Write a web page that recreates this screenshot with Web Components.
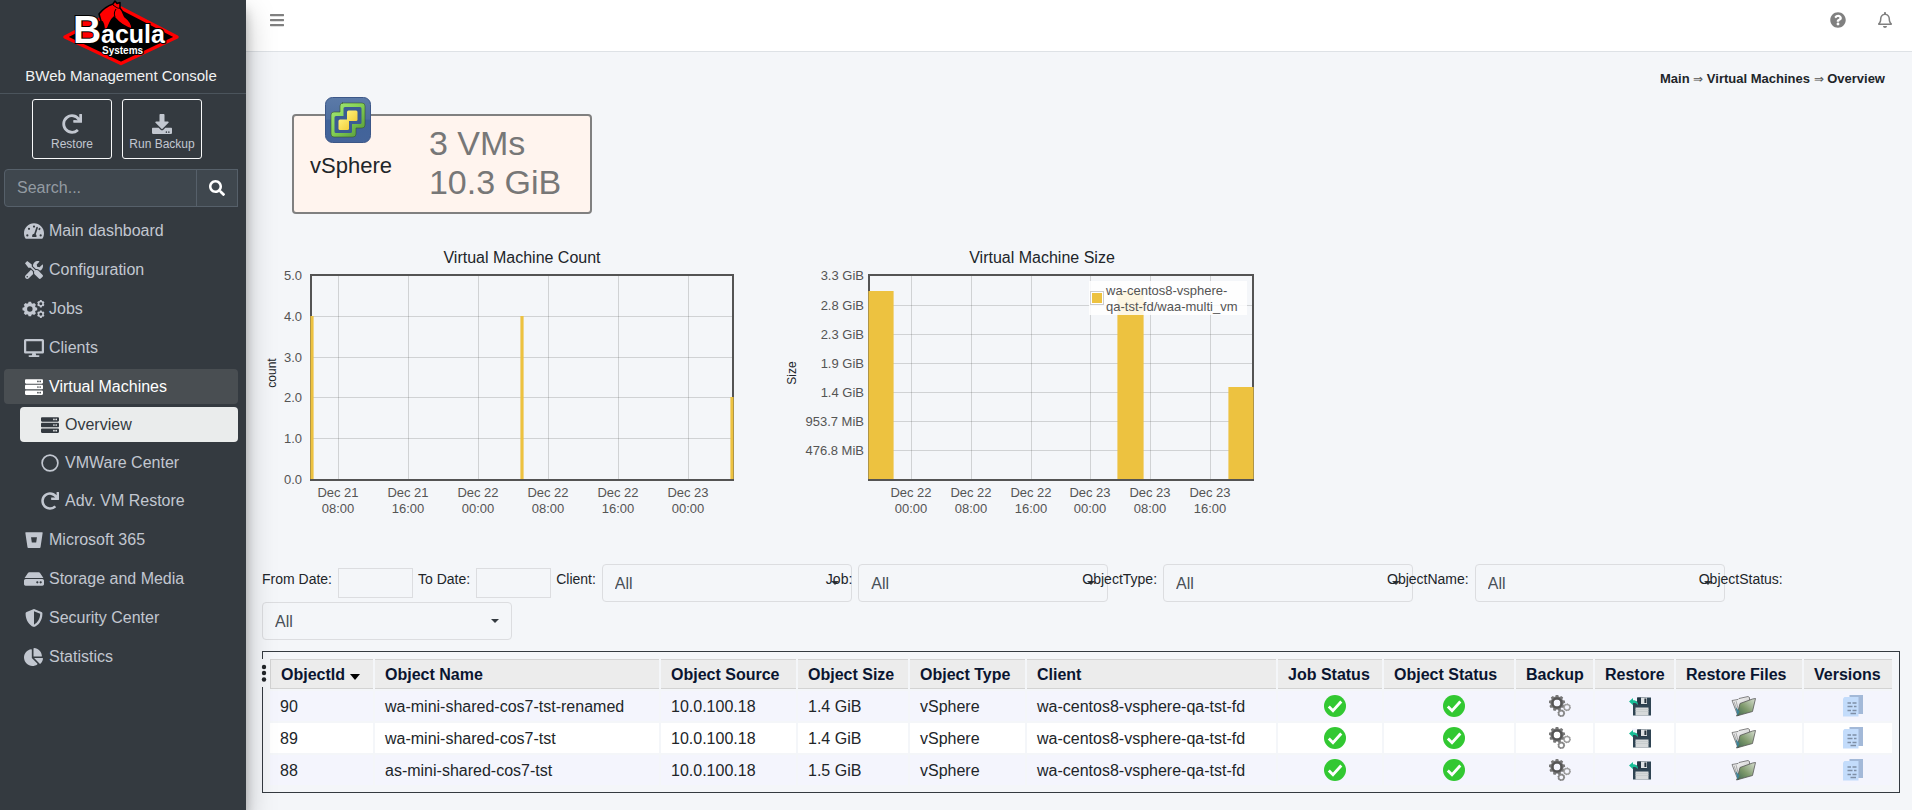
<!DOCTYPE html>
<html lang="en">
<head>
<meta charset="utf-8">
<title>BWeb - Virtual Machines Overview</title>
<style>
    body {
        margin: 0;
        background: #f4f6f9;
        color: #212529;
        font: 16px/24px "Liberation Sans", Arial, sans-serif;
    }
</style>
</head>
<body>
<bweb-app>
    <bweb-sidebar slot="sidebar">
        <nav-item icon="gauge">Main dashboard</nav-item>
        <nav-item icon="tools">Configuration</nav-item>
        <nav-item icon="cogs">Jobs</nav-item>
        <nav-item icon="desktop">Clients</nav-item>
        <nav-item icon="server" state="open">Virtual Machines
            <nav-item slot="sub" icon="server" state="active">Overview</nav-item>
            <nav-item slot="sub" icon="circle">VMWare Center</nav-item>
            <nav-item slot="sub" icon="redo">Adv. VM Restore</nav-item>
        </nav-item>
        <nav-item icon="bucket">Microsoft 365</nav-item>
        <nav-item icon="hdd">Storage and Media</nav-item>
        <nav-item icon="shield">Security Center</nav-item>
        <nav-item icon="pie">Statistics</nav-item>
    </bweb-sidebar>
    <top-bar></top-bar>
    <bread-crumb></bread-crumb>
    <vm-card>vSphere
        <span slot="count">3 VMs</span>
        <span slot="size">10.3 GiB</span>
    </vm-card>
    <chart-row>
        <bar-chart series="count">Virtual Machine Count</bar-chart>
        <bar-chart series="size">Virtual Machine Size</bar-chart>
    </chart-row>
    <filter-bar></filter-bar>
    <object-table></object-table>
</bweb-app>

<script>
// Gear outline centred on cx,cy with a round hole
function gear(cx, cy, r, teeth, hole) {
    const pts = [];
    const step = Math.PI * 2 / teeth;
    for (let i = 0; i < teeth; i++) {
        [[-0.36, 0.8], [-0.22, 1], [0.22, 1], [0.36, 0.8]].forEach(([a, k]) => {
            const t = (i + a) * step;
            pts.push((cx + Math.sin(t) * r * k).toFixed(1) + ' ' + (cy - Math.cos(t) * r * k).toFixed(1));
        });
    }
    return `M${pts.join('L')}zM${cx - hole} ${cy}a${hole} ${hole} 0 1 0 ${hole * 2} 0a${hole} ${hole} 0 1 0 ${-hole * 2} 0z`;
}

const serverUnit = y => `M480 ${y + 128}H32c-18 0-32-14-32-32v-64c0-18 14-32 32-32h448c18 0 32 14 32 32v64c0 18-14 32-32 32zM432 ${y + 40}a24 24 0 1 0 0 48a24 24 0 1 0 0-48zM368 ${y + 40}a24 24 0 1 0 0 48a24 24 0 1 0 0-48z`;

// name: [viewBox width, viewBox height, markup]
const ICONS = {
    bars: [448, 512, '<path d="M16 132h416c8.8 0 16-7.2 16-16V76c0-8.800-7.200-16-16-16H16C7.200 60 0 67.200 0 76v40c0 8.800 7.200 16 16 16zm0 160h416c8.800 0 16-7.200 16-16v-40c0-8.800-7.200-16-16-16H16c-8.800 0-16 7.200-16 16v40c0 8.800 7.200 16 16 16zm0 160h416c8.800 0 16-7.200 16-16v-40c0-8.800-7.200-16-16-16H16c-8.800 0-16 7.200-16 16v40c0 8.800 7.200 16 16 16z"/>'],
    search: [512, 512, '<path d="M505 442.700L405.300 343c-4.500-4.500-10.600-7-17-7H372c27.600-35.300 44-79.700 44-128C416 93.100 322.900 0 208 0S0 93.100 0 208s93.100 208 208 208c48.300 0 92.700-16.400 128-44v16.300c0 6.400 2.500 12.500 7 17l99.700 99.700c9.400 9.400 24.600 9.400 33.900 0l28.300-28.300c9.400-9.400 9.400-24.600.1-34zM208 336c-70.700 0-128-57.200-128-128 0-70.700 57.200-128 128-128 70.700 0 128 57.200 128 128 0 70.700-57.200 128-128 128z"/>'],
    question: [512, 512, '<path d="M504 256c0 137-111 248-248 248S8 393 8 256C8 119 119 8 256 8s248 111 248 248zM262.700 90c-54.500 0-89.300 23-116.600 63.800-3.500 5.300-2.400 12.400 2.700 16.300l34.700 26.300c5.200 3.900 12.600 3 16.700-2.100 17.900-22.700 30.100-35.800 57.300-35.800 20.400 0 45.700 13.100 45.700 33 0 15-12.400 22.700-32.500 34C247.100 238.500 216 254.900 216 296v4c0 6.600 5.400 12 12 12h56c6.600 0 12-5.400 12-12v-1.300c0-28.500 83.200-29.600 83.200-106.700 0-58-60.200-102-116.500-102zM256 338c-25.400 0-46 20.600-46 46s20.600 46 46 46 46-20.600 46-46-20.600-46-46-46z"/>'],
    bell: [448, 512, '<path d="M439.390 362.290c-19.320-20.760-55.470-51.990-55.470-154.290 0-77.700-54.480-139.900-127.940-155.160V32c0-17.670-14.320-32-31.980-32s-31.980 14.330-31.980 32v20.840C118.560 68.100 64.080 130.300 64.080 208c0 102.300-36.150 133.530-55.470 154.290-6 6.450-8.660 14.160-8.610 21.710.11 16.400 12.980 32 32.100 32h383.800c19.120 0 32-15.600 32.100-32 .05-7.550-2.610-15.270-8.610-21.710zM67.530 368c21.220-27.970 44.420-74.330 44.530-159.420 0-.2-.06-.38-.06-.58 0-61.860 50.140-112 112-112s112 50.140 112 112c0 .2-.06.38-.06.58.11 85.100 23.310 131.460 44.530 159.420H67.530zM224 512c35.320 0 63.970-28.650 63.970-64H160.030c0 35.350 28.650 64 63.970 64z"/>'],
    redo: [512, 512, '<path d="M500.330 0h-47.410a12 12 0 0 0-12 12.570l4 82.760A247.420 247.420 0 0 0 256 8C119.340 8 7.900 119.530 8 256.190 8.100 393.070 119.100 504 256 504a247.100 247.100 0 0 0 166.180-63.910 12 12 0 0 0 .48-17.430l-34-34a12 12 0 0 0-16.380-.55A176 176 0 1 1 402.100 157.800l-101.530-4.870a12 12 0 0 0-12.570 12v47.410a12 12 0 0 0 12 12h200.330a12 12 0 0 0 12-12V12a12 12 0 0 0-12-12z"/>'],
    download: [512, 512, '<path d="M216 0h80c13.300 0 24 10.700 24 24v168h87.700c17.800 0 26.700 21.500 14.100 34.100L269.700 378.300c-7.500 7.500-19.800 7.500-27.300 0L90.100 226.100c-12.600-12.600-3.700-34.100 14.100-34.100H192V24c0-13.300 10.700-24 24-24zm296 376v112c0 13.300-10.700 24-24 24H24c-13.300 0-24-10.700-24-24V376c0-13.300 10.700-24 24-24h146.700l49 49c20.100 20.100 52.500 20.100 72.600 0l49-49H488c13.300 0 24 10.700 24 24zm-124 88c0-11-9-20-20-20s-20 9-20 20 9 20 20 20 20-9 20-20zm64 0c0-11-9-20-20-20s-20 9-20 20 9 20 20 20 20-9 20-20z"/>'],
    gauge: [576, 512, '<path d="M288 32C129 32 0 161 0 320c0 53 14 102 39 145 6 9 16 15 27 15h443c12 0 22-6 28-15 25-43 39-92 39-145 0-159-129-288-288-288zM288 96a32 32 0 1 1 0 64a32 32 0 1 1 0-64zM96 352a32 32 0 1 1 0 64a32 32 0 1 1 0-64zM144 160a32 32 0 1 1 0 64a32 32 0 1 1 0-64zM480 352a32 32 0 1 1 0 64a32 32 0 1 1 0-64zM447 165a32 32 0 1 1-32 50l14-44a32 32 0 0 1 18-6zM383 137c13 4 20 17 16 30l-61 184c23 20 30 49 18 81H240c-20-42 8-96 53-96l60-184c4-12 18-19 30-15z"/>'],
    tools: [512, 512, '<path d="M501.100 395.700L384 278.600c-23.100-23.100-57.600-27.600-85.400-13.900L192 158.100V96L64 0 0 64l96 128h62.100l106.600 106.600c-13.600 27.800-9.200 62.300 13.900 85.400l117.100 117.100c14.600 14.600 38.200 14.600 52.700 0l52.700-52.700c14.500-14.600 14.500-38.200 0-52.700zM331.700 225c28.300 0 54.900 11 74.900 31l19.400 19.400c15.800-6.900 30.800-16.500 43.800-29.500 37.100-37.100 49.700-89.300 37.900-136.700-2.200-9-13.500-12.100-20.100-5.500l-74.400 74.400-67.900-11.300L334 98.900l74.400-74.400c6.600-6.600 3.400-17.900-5.700-20.200-47.400-11.700-99.600.9-136.600 37.900-28.500 28.500-41.900 66.100-41.200 103.600l82.100 82.100c8.100-1.900 16.500-2.900 24.700-2.900zm-103.900 82l-56.700-56.700L18.700 402.800c-25 25-25 65.500 0 90.500s65.500 25 90.500 0l123.600-123.600c-7.600-19.900-9.900-41.600-5-62.700zM64 472c-13.200 0-24-10.800-24-24 0-13.300 10.700-24 24-24s24 10.700 24 24c0 13.200-10.700 24-24 24z"/>'],
    cogs: [640, 512, `<path d="${gear(216, 256, 212, 8, 78)}${gear(528, 106, 108, 6, 42)}${gear(528, 404, 108, 6, 42)}"/>`],
    desktop: [576, 512, '<path d="M528 0H48C21.500 0 0 21.500 0 48v320c0 26.500 21.500 48 48 48h192l-16 48h-72c-13.300 0-24 10.700-24 24s10.700 24 24 24h272c13.300 0 24-10.700 24-24s-10.700-24-24-24h-72l-16-48h192c26.500 0 48-21.500 48-48V48c0-26.500-21.500-48-48-48zm-16 352H64V64h448v288z"/>'],
    server: [512, 512, `<path d="${serverUnit(32)}${serverUnit(192)}${serverUnit(352)}"/>`],
    circle: [512, 512, '<path d="M256 8a248 248 0 1 0 0 496a248 248 0 1 0 0-496zM256 56a200 200 0 1 1 0 400a200 200 0 1 1 0-400z"/>'],
    bucket: [512, 512, '<path d="M24 32h464c9 0 17 8 15 18l-62 410c-2 12-10 20-22 20H93c-12 0-20-8-22-20L9 50c-2-10 6-18 15-18zM172 176l22 150h124l22-150z"/>'],
    hdd: [576, 512, '<path d="M576 304v96c0 26.500-21.500 48-48 48H48c-26.500 0-48-21.500-48-48v-96c0-26.500 21.500-48 48-48h480c26.500 0 48 21.500 48 48zm-48-80a79.600 79.600 0 0 1 30.800 6.200L462.300 85.400A48 48 0 0 0 422.300 64H153.700a48 48 0 0 0-40 21.400L17.200 230.200A79.600 79.600 0 0 1 48 224h480zm-48 96c-17.700 0-32 14.300-32 32s14.300 32 32 32 32-14.300 32-32-14.300-32-32-32zm-96 0c-17.700 0-32 14.300-32 32s14.300 32 32 32 32-14.300 32-32-14.300-32-32-32z"/>'],
    shield: [512, 512, '<path d="M466.500 83.700l-192-80a48.150 48.150 0 0 0-36.900 0l-192 80C27.700 91.100 16 108.600 16 128c0 198.500 114.500 335.700 221.500 380.300 11.800 4.900 25.100 4.900 36.900 0C360.100 472.600 496 349.300 496 128c0-19.400-11.700-36.900-29.500-44.300zM256.100 446.300l-.1-381 175.900 73.300c-3.300 151.400-82.100 261.100-175.800 307.700z"/>'],
    pie: [544, 512, '<path d="M527.790 288H290.500l158.030 158.030c6.040 6.040 15.980 6.530 22.190.68 38.700-36.460 65.320-85.610 73.130-140.860 1.340-9.460-6.510-17.850-16.060-17.850zm-15.830-64.800C503.720 103.740 408.260 8.280 288.800.04 279.680-.59 272 7.100 272 16.240V240h223.770c9.140 0 16.820-7.680 16.190-16.800zM224 288V50.710c0-9.550-8.390-17.400-17.840-16.060C86.990 51.490-4.100 155.600.14 280.370 4.500 408.510 114.830 513.590 243.030 511.980c50.400-.63 96.970-16.870 135.260-44.030 7.900-5.600 8.420-17.230 1.570-24.080L224 288z"/>'],
    dots: [10, 28, '<circle cx="5" cy="8" r="2.200"/><circle cx="5" cy="14" r="2.200"/><circle cx="5" cy="20.500" r="2.200"/>'],

    ok: [22, 22, '<circle cx="11" cy="11" r="11" fill="#32c832"/><path d="M4.800 11.500l4.200 4.300 8.300-9.300" fill="none" stroke="#fff" stroke-width="2.800"/>'],
    backup: [22, 22, `
        <path d="${gear(8, 8, 8.2, 9, 3.4)}" fill="#777"/>
        <circle cx="8" cy="8" r="4.600" fill="none" stroke="#555" stroke-width="2.200"/>
        <circle cx="18" cy="12.300" r="2.900" fill="none" stroke="#a4a4a4" stroke-width="1.500"/>
        <circle cx="12.300" cy="18.300" r="2.700" fill="none" stroke="#8c8c8c" stroke-width="1.700"/>
        <circle cx="18" cy="12.300" r="3.400" fill="none" stroke="#8a8a8a" stroke-dasharray="1 1.600"/>
        <circle cx="12.300" cy="18.300" r="3.300" fill="none" stroke="#777" stroke-dasharray="1 1.600"/>`],
    restore: [22, 22, `
        <path d="M4 2.500h18v18H4z" fill="#2f4453"/>
        <path d="M8.500 2.500h9v7h-9z" fill="#243543"/>
        <path d="M12 2.500h6v6.500h-6z" fill="#dde1e3"/><path d="M15.400 3.500h2v4.500h-2z" fill="#26333d"/>
        <path d="M6.500 12.500h13v8h-13z" fill="#d6d9da"/><path d="M6.500 14.500h13M6.500 16.500h13" stroke="#c0c4c6" stroke-width=".6"/>
        <path d="M3 1.500h5v5h-5z" fill="#f4f5fd"/>
        <path d="M0 6.600l4-3.600v2.200c3 0 5 1.400 5 5-1-1.700-2.500-2.300-5-2.200v2.200z" fill="#17bd96"/>`],
    files: [26, 22, `
        <defs>
            <linearGradient id="p" x1="0" y1="0" x2="1" y2="1"><stop offset="0" stop-color="#fff"/><stop offset="1" stop-color="#bbb"/></linearGradient>
            <linearGradient id="f" x1="0" y1="1" x2="1" y2="0"><stop offset="0" stop-color="#3f6650"/><stop offset=".45" stop-color="#7f9a6c"/><stop offset="1" stop-color="#d8dfd2"/></linearGradient>
        </defs>
        <path d="M1 5.500l6-1 1-1 9-2 1.500 1v3L7 21z" fill="url(#p)" stroke="#666" stroke-width=".8"/>
        <path d="M3 6.500l4.500 13M5 6l3 11" stroke="#999" stroke-width=".8" fill="none"/>
        <path d="M9 8.500l12.500-4.500 3-.5-3 13L5.500 21l1-2z" fill="url(#f)" stroke="#555" stroke-width=".8"/>
        <path d="M4.500 12l2 8.500 2-4z" fill="#3d8296"/>`],
    versions: [22, 22, `
        <path d="M7.500 0h13.500v19h-13.500z" fill="#a3b9d8"/>
        <path d="M1 3.500l1.500-1.500h14v19.500h-15.500z" fill="#c3dcfb"/>
        <path d="M5.500 8h3.500m1.500 0h4M5.500 11.500h5m1.500 0h2.500M5.500 15.500h3.500m1.500 0h4M8.500 18.500h5.500" stroke="#7f8fa6" stroke-width="1.300"/>`],
    vsphere: [46, 46, `
        <defs>
            <linearGradient id="b" x1="0" y1="0" x2="0" y2="1"><stop offset="0" stop-color="#5b7aa8"/><stop offset=".48" stop-color="#4f6f9f"/><stop offset=".5" stop-color="#41639a"/><stop offset="1" stop-color="#44649a"/></linearGradient>
            <linearGradient id="g" x1="0" y1="0" x2="1" y2="1"><stop offset="0" stop-color="#a6e97a"/><stop offset=".45" stop-color="#86d255"/><stop offset="1" stop-color="#4f9237"/></linearGradient>
            <linearGradient id="y" x1="0" y1="0" x2="1" y2="1"><stop offset="0" stop-color="#fff07a"/><stop offset="1" stop-color="#f3cf3c"/></linearGradient>
        </defs>
        <rect x=".5" y=".5" width="45" height="45" rx="7" fill="url(#b)" stroke="#3c5788"/>
        <path d="M17 6h20q3 0 3 3v19q0 3-3 3h-6v6q0 3-3 3h-19q-3 0-3-3v-19q0-3 3-3h6v-6q0-3 3-3z" fill="url(#g)" stroke="#36562f" stroke-width=".6"/>
        <path d="M20 10h15q1.500 0 1.500 1.500v14q0 1.500-1.500 1.500h-8v7.500q0 1.500-1.500 1.500h-14.500q-1.500 0-1.500-1.500v-14q0-1.500 1.500-1.500h7.500v-7.500q0-1.500 1.500-1.500z" fill="#3b5b93"/>
        <rect x="22" y="13.500" width="10.500" height="10.500" rx="1.500" fill="url(#y)"/>
        <rect x="13.500" y="22.500" width="10.500" height="10.500" rx="1.500" fill="url(#y)"/>`]
};

class UiIcon extends HTMLElement {
    connectedCallback() {
        const [w, h, body] = ICONS[this.getAttribute('name')];
        const size = Number(this.getAttribute('size') || 16);
        this.attachShadow({ mode: 'open' });
        this.shadowRoot.innerHTML = `
            <style>
                :host { display: inline-flex; vertical-align: middle; }
                svg { display: block; fill: currentColor; fill-rule: evenodd; }
            </style>
            <svg width="${Math.round(size * w / h)}" height="${size}" viewBox="0 0 ${w} ${h}" aria-hidden="true">${body}</svg>
        `;
    }
}

class BwebApp extends HTMLElement {
    connectedCallback() {
        this.attachShadow({ mode: 'open' });
        this.shadowRoot.innerHTML = `
            <style>
                :host { display: flex; min-height: 100vh; position: relative; overflow: hidden; }
                main { flex: 1; min-width: 0; display: flex; flex-direction: column; }
                .edge {
                    width: 0;
                    box-shadow: 0 14px 28px rgba(0, 0, 0, .25), 0 10px 10px rgba(0, 0, 0, .22);
                }
            </style>
            <slot name="sidebar"></slot>
            <main><slot></slot></main>
            <div class="edge"></div>
        `;
    }
}

class BwebSidebar extends HTMLElement {
    connectedCallback() {
        this.attachShadow({ mode: 'open' });
        this.shadowRoot.innerHTML = `
            <style>
                :host {
                    display: block;
                    flex: 0 0 246px;
                    min-width: 0;
                    background: #343a40;
                    color: #c2c7d0;
                    z-index: 1;
                    box-shadow: 0 14px 28px rgba(0, 0, 0, .25), 0 10px 10px rgba(0, 0, 0, .22);
                }
                .brand {
                    display: flex;
                    flex-direction: column;
                    align-items: center;
                    padding: 0 4px 7px 0;
                    border-bottom: 1px solid #4b545c;
                    color: #f1f2f3;
                    font-size: 15px;
                    line-height: 20px;
                    text-decoration: none;
                }
                .brand svg { display: block; }
                .actions { display: flex; gap: 10px; padding: 5px 32px 10px; }
                .actions button {
                    box-sizing: border-box;
                    display: flex;
                    flex-direction: column;
                    align-items: center;
                    justify-content: flex-end;
                    gap: 2px;
                    width: 80px;
                    height: 60px;
                    padding: 0 0 6px;
                    border: 1px solid #f8f9fa;
                    border-radius: 3px;
                    background: none;
                    color: #c2c7d0;
                    font: 12px/16px "Liberation Sans", Arial, sans-serif;
                    white-space: nowrap;
                }
                form { display: flex; margin: 0 8px 6px 4px; }
                form input, form button {
                    box-sizing: border-box;
                    height: 38px;
                    border: 1px solid #56606a;
                    background: #3f474e;
                }
                form input {
                    flex: 1;
                    min-width: 0;
                    padding: 0 12px;
                    border-radius: 4px 0 0 4px;
                    color: #fff;
                    font: inherit;
                }
                form input::placeholder { color: #939ba2; }
                form button { width: 42px; margin-left: -1px; padding: 0; color: #fff; }
                nav { display: flex; flex-direction: column; gap: 4px; padding: 0 8px 0 4px; }
            </style>
            <a class="brand" href="#home">
                <svg width="118" height="66" viewBox="0 0 118 66" aria-hidden="true">
                    <path d="M59 8L115 37L59 63.500L3 37z" fill="#000" stroke="#f00" stroke-width="3.500" stroke-linejoin="round"/>
                    <path d="M53 1l2 2.500 3-1v5.500c3 3 3 6 5 9 4 3 7 7 7 12-8-2-13-6-18-12-5 4-6 11-9 19-1-8-1-14-4-15l-2-7c4-5 8-8 14-10z" fill="#f00" stroke="#000" stroke-width="1.500" stroke-linejoin="round"/>
                    <path d="M51 5c3 2 5 4 7 3M53 17c-1-3-1-5 1-8" fill="none" stroke="#000" stroke-width="1"/>
                    <path d="M15 17h17v23h-17z" fill="#f00"/>
                    <g fill="#fff" stroke="#000" stroke-width="2" paint-order="stroke" font-family="Liberation Sans, Arial, sans-serif" font-weight="bold">
                        <text x="11" y="43" font-size="39">B</text>
                        <text x="39" y="43" font-size="25">acula</text>
                        <text x="40" y="54" font-size="10">Systems</text>
                    </g>
                </svg>
                <span>BWeb Management Console</span>
            </a>
            <div class="actions">
                <button type="button"><ui-icon name="redo" size="20"></ui-icon>Restore</button>
                <button type="button"><ui-icon name="download" size="20"></ui-icon>Run Backup</button>
            </div>
            <form role="search">
                <input type="search" placeholder="Search..." aria-label="Search">
                <button type="button" aria-label="Search"><ui-icon name="search"></ui-icon></button>
            </form>
            <nav><slot></slot></nav>
        `;
    }
}

class NavItem extends HTMLElement {
    connectedCallback() {
        this.attachShadow({ mode: 'open' });
        this.shadowRoot.innerHTML = `
            <style>
                :host { display: block; }
                a {
                    display: flex;
                    align-items: center;
                    height: 35px;
                    padding-left: 16px;
                    border-radius: 4px;
                    color: #c2c7d0;
                    text-decoration: none;
                    white-space: nowrap;
                }
                .icon { display: flex; justify-content: center; width: 27px; margin-right: 2px; }
                .sub { display: flex; flex-direction: column; gap: 3px; padding: 3px 0 0 16px; }
                :host([state="open"]) > a { background: #494e52; color: #fff; }
                :host([state="active"]) > a { background: #eaecec; color: #343a40; }
            </style>
            <a href="#"><span class="icon"><ui-icon name="${this.getAttribute('icon')}" size="18"></ui-icon></span><span><slot></slot></span></a>
            ${this.querySelector('[slot=sub]') ? '<div class="sub"><slot name="sub"></slot></div>' : ''}
        `;
    }
}

class TopBar extends HTMLElement {
    connectedCallback() {
        this.attachShadow({ mode: 'open' });
        this.shadowRoot.innerHTML = `
            <style>
                :host {
                    display: flex;
                    gap: 32px;
                    padding: 12px 20px 23px 24px;
                    border-bottom: 1px solid #dee2e6;
                    background: #fff;
                }
                button { display: flex; padding: 0; border: 0; background: none; color: #808080; }
                button:first-of-type { margin-right: auto; }
            </style>
            <button type="button" aria-label="Menu"><ui-icon name="bars"></ui-icon></button>
            <button type="button" aria-label="Help"><ui-icon name="question"></ui-icon></button>
            <button type="button" aria-label="Notifications"><ui-icon name="bell"></ui-icon></button>
        `;
    }
}

class BreadCrumb extends HTMLElement {
    connectedCallback() {
        this.attachShadow({ mode: 'open' });
        this.shadowRoot.innerHTML = `
            <style>
                :host { display: block; padding: 17px 27px 25px; text-align: right; font-size: 13px; line-height: 20px; }
                a { color: #212529; font-weight: bold; text-decoration: none; }
                span { color: #555; font-size: 12px; }
            </style>
            <a href="#main">Main</a> <span>&rArr;</span> <a href="#vm">Virtual Machines</a> <span>&rArr;</span> <a href="#overview">Overview</a>
        `;
    }
}

class VmCard extends HTMLElement {
    connectedCallback() {
        this.attachShadow({ mode: 'open' });
        this.shadowRoot.innerHTML = `
            <style>
                :host {
                    box-sizing: border-box;
                    display: flex;
                    gap: 37px;
                    width: 300px;
                    min-height: 100px;
                    margin: 0 0 32px 46px;
                    padding: 0 16px;
                    border: 2px solid #808080;
                    border-radius: 4px;
                    background: #fff4ee;
                }
                .kind { display: flex; flex-direction: column; gap: 8px; font-size: 22px; line-height: 30px; }
                .kind ui-icon { margin: -19px 0 0 15px; }
                .stats { display: flex; flex-direction: column; padding-top: 8px; color: #777; font-size: 34px; line-height: 39px; }
            </style>
            <div class="kind"><ui-icon name="vsphere" size="46"></ui-icon><span><slot></slot></span></div>
            <div class="stats"><slot name="count"></slot><slot name="size"></slot></div>
        `;
    }
}

class ChartRow extends HTMLElement {
    connectedCallback() {
        this.attachShadow({ mode: 'open' });
        this.shadowRoot.innerHTML = `
            <style>:host { display: flex; flex-wrap: wrap; padding: 0 12px 44px 16px; }</style>
            <slot></slot>
        `;
    }
}

const CHARTS = {
    count: {
        axis: 'count',
        left: 49,
        labelX: 40,
        y: [['5.0', 5], ['4.0', 46], ['3.0', 87], ['2.0', 127], ['1.0', 168], ['0.0', 209]],
        x: [['Dec 21', '08:00', 76], ['Dec 21', '16:00', 146], ['Dec 22', '00:00', 216], ['Dec 22', '08:00', 286], ['Dec 22', '16:00', 356], ['Dec 23', '00:00', 426]],
        bars: [[49, 46, 2], [259, 46, 2], [469, 127, 2]]
    },
    size: {
        axis: 'Size',
        left: 87,
        labelX: 82,
        y: [['3.3 GiB', 5], ['2.8 GiB', 35], ['2.3 GiB', 64], ['1.9 GiB', 93], ['1.4 GiB', 122], ['953.7 MiB', 151], ['476.8 MiB', 180]],
        x: [['Dec 22', '00:00', 129], ['Dec 22', '08:00', 189], ['Dec 22', '16:00', 249], ['Dec 23', '00:00', 308], ['Dec 23', '08:00', 368], ['Dec 23', '16:00', 428]],
        bars: [[87, 21, 24], [336, 21, 25], [447, 117, 24]],
        legend: ['wa-centos8-vsphere-', 'qa-tst-fd/waa-multi_vm']
    }
};

class BarChart extends HTMLElement {
    connectedCallback() {
        const c = CHARTS[this.getAttribute('series')];
        // Each bar is solid with a half-transparent edge one pixel wide
        const bar = ([x, y, w]) => `
            <rect x="${x - 1}" y="${y}" width="${w + 2}" height="${209 - y}" fill="#edc240" fill-opacity=".6"/>
            <rect x="${x}" y="${y}" width="${w}" height="${209 - y}" fill="#edc240"/>`;
        this.attachShadow({ mode: 'open' });
        this.shadowRoot.innerHTML = `
            <style>
                :host { display: block; width: 520px; }
                h2 { margin: 0; font-size: 16px; font-weight: normal; line-height: 24px; text-align: center; }
                svg { display: block; overflow: visible; font-size: 13px; fill: #545454; }
                .grid { stroke: #545454; stroke-opacity: .22; }
                .axis { fill: #212529; font-size: 12px; }
            </style>
            <h2><slot></slot></h2>
            <svg width="520" height="250" viewBox="0 0 520 250">
                <rect x="${c.left}" y="5" width="${471 - c.left}" height="205" fill="none" stroke="#545454" stroke-width="2"/>
                ${c.y.slice(1).map(([, y]) => `<path class="grid" d="M${c.left + 1} ${y}.5H470"/>`).join('')}
                ${c.x.map(([, , x]) => `<path class="grid" d="M${x}.5 6V209"/>`).join('')}
                ${c.bars.map(bar).join('')}
                ${c.y.map(([t, y]) => `<text x="${c.labelX}" y="${y + 5}" text-anchor="end">${t}</text>`).join('')}
                ${c.x.map(([d, h, x]) => `<text x="${x}" y="227" text-anchor="middle">${d}</text><text x="${x}" y="243" text-anchor="middle">${h}</text>`).join('')}
                <text class="axis" transform="translate(14 103) rotate(-90)" text-anchor="middle">${c.axis}</text>
                ${c.legend ? `
                    <rect x="307" y="11" width="158" height="34" fill="#fff" fill-opacity=".85"/>
                    <rect x="308.500" y="21.500" width="13" height="13" fill="#fff" stroke="#ccc"/>
                    <rect x="310" y="23" width="10" height="10" fill="#edc240"/>
                    <text x="324" y="25">${c.legend[0]}</text>
                    <text x="324" y="41">${c.legend[1]}</text>` : ''}
            </svg>
        `;
    }
}

class FilterBar extends HTMLElement {
    connectedCallback() {
        const date = (id, name) => `<label for="${id}">${name}:</label><input id="${id}" type="text">`;
        const select = (id, name) => `<label for="${id}">${name}:</label><select id="${id}"><option>All</option></select>`;
        this.attachShadow({ mode: 'open' });
        this.shadowRoot.innerHTML = `
            <style>
                :host { display: flex; flex-wrap: wrap; align-items: center; column-gap: 5px; padding: 0 12px 11px 16px; }
                label { position: relative; z-index: 1; padding: 0 1px 8px 0; font-size: 14px; }
                input, select {
                    box-sizing: border-box;
                    border: 1px solid #dcdde0;
                    background: none;
                    color: #495057;
                    font: inherit;
                }
                input { width: 75px; height: 30px; }
                select {
                    appearance: none;
                    width: 250px;
                    height: 38px;
                    margin-right: -31px;
                    padding: 2px 12px 0;
                    border-radius: 4px;
                    background: url("data:image/svg+xml,%3Csvg xmlns='http://www.w3.org/2000/svg' width='8' height='4'%3E%3Cpath d='M0 0h8L4 4z' fill='%23343a40'/%3E%3C/svg%3E") no-repeat right 12px center;
                }
            </style>
            ${date('from', 'From Date')}
            ${date('to', 'To Date')}
            ${select('client', 'Client')}
            ${select('job', 'Job')}
            ${select('type', 'ObjectType')}
            ${select('name', 'ObjectName')}
            ${select('status', 'ObjectStatus')}
        `;
    }
}

const COLUMNS = [
    ['ObjectId', 103], ['Object Name', 284], ['Object Source', 135], ['Object Size', 110],
    ['Object Type', 115], ['Client', 249], ['Job Status', 104], ['Object Status', 130],
    ['Backup', 77], ['Restore', 79], ['Restore Files', 126], ['Versions', 88]
];

const ROWS = [
    ['90', 'wa-mini-shared-cos7-tst-renamed', '10.0.100.18', '1.4 GiB', 'vSphere', 'wa-centos8-vsphere-qa-tst-fd'],
    ['89', 'wa-mini-shared-cos7-tst', '10.0.100.18', '1.4 GiB', 'vSphere', 'wa-centos8-vsphere-qa-tst-fd'],
    ['88', 'as-mini-shared-cos7-tst', '10.0.100.18', '1.5 GiB', 'vSphere', 'wa-centos8-vsphere-qa-tst-fd']
];

class ObjectTable extends HTMLElement {
    connectedCallback() {
        const total = COLUMNS.reduce((sum, c) => sum + c[1], 0);
        const action = (icon, label) => `<td class="icon"><a href="#" aria-label="${label}"><ui-icon name="${icon}" size="22"></ui-icon></a></td>`;
        this.attachShadow({ mode: 'open' });
        this.shadowRoot.innerHTML = `
            <style>
                :host {
                    display: block;
                    position: relative;
                    margin: 0 12px 16px 16px;
                    padding: 5px;
                    border: 1px solid #343a40;
                }
                .columns {
                    position: absolute;
                    left: -4px;
                    top: 7px;
                    padding: 0;
                    border: 0;
                    background: #f4f6f9;
                    color: #212529;
                }
                table { width: 100%; table-layout: fixed; border-collapse: separate; border-spacing: 2px; }
                th, td { height: 30px; box-sizing: border-box; padding: 2px 0 0 10px; text-align: left; white-space: nowrap; }
                th {
                    border: solid #d3d3d3;
                    border-width: 1px 0;
                    background: #ececec;
                    color: #0a1530;
                }
                th:first-child { border-left-width: 1px; }
                tbody tr:nth-child(odd) td { background: #f4f5fd; }
                tbody tr:nth-child(even) td { background: #fff; }
                td.icon { padding-top: 0; text-align: center; line-height: 22px; }
                .sort {
                    display: inline-block;
                    margin-left: 5px;
                    border: solid transparent;
                    border-width: 6px 5px 0;
                    border-top-color: #000;
                }
            </style>
            <button class="columns" type="button" aria-label="Columns"><ui-icon name="dots" size="28"></ui-icon></button>
            <table>
                <colgroup>${COLUMNS.map(([, w]) => `<col style="width: ${w / total * 100}%">`).join('')}</colgroup>
                <thead><tr>${COLUMNS.map(([name], i) => `<th>${name}${i ? '' : '<span class="sort"></span>'}</th>`).join('')}</tr></thead>
                <tbody>${ROWS.map(row => `<tr>
                    ${row.map(cell => `<td>${cell}</td>`).join('')}
                    <td class="icon"><ui-icon name="ok" size="22"></ui-icon></td>
                    <td class="icon"><ui-icon name="ok" size="22"></ui-icon></td>
                    ${action('backup', 'Backup')}${action('restore', 'Restore')}${action('files', 'Restore files')}${action('versions', 'Versions')}
                </tr>`).join('')}</tbody>
            </table>
        `;
    }
}

customElements.define('ui-icon', UiIcon);
customElements.define('bweb-app', BwebApp);
customElements.define('bweb-sidebar', BwebSidebar);
customElements.define('nav-item', NavItem);
customElements.define('top-bar', TopBar);
customElements.define('bread-crumb', BreadCrumb);
customElements.define('vm-card', VmCard);
customElements.define('chart-row', ChartRow);
customElements.define('bar-chart', BarChart);
customElements.define('filter-bar', FilterBar);
customElements.define('object-table', ObjectTable);
</script>
</body>
</html>
